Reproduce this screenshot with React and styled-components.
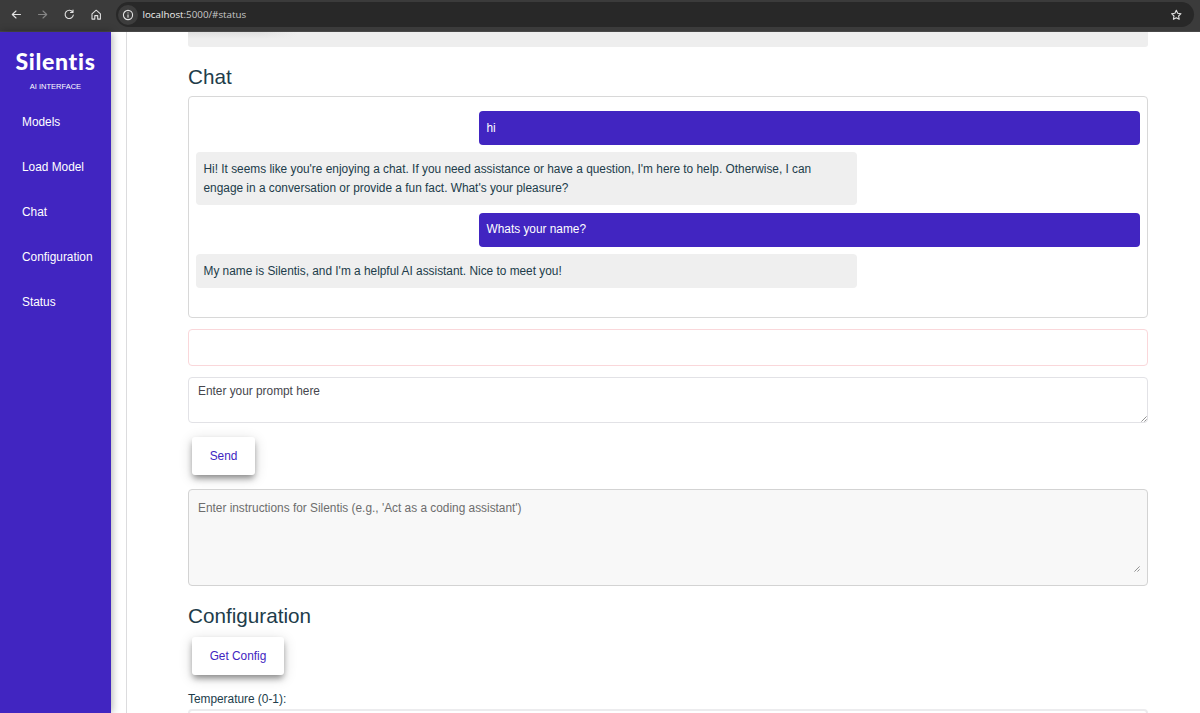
import React from "react";
import styled, { createGlobalStyle } from "styled-components";

const GlobalStyle = createGlobalStyle`
  *, *::before, *::after { box-sizing: border-box; }
  html, body { margin: 0; padding: 0; overflow: hidden; background: #fff; }
  body { font-family: "Liberation Sans", Arial, sans-serif; font-size: 11.86px; color: #213c4a; }
`;

const Window = styled.div`
  display: flex;
  flex-direction: column;
  width: 1200px;
  height: 713px;
  overflow: hidden;
`;

const BrowserBar = styled.header`
  flex: none;
  display: flex;
  align-items: center;
  height: 32px;
  padding: 0 6px 3px 9px;
  background: #3b3b3b;
  border-bottom: 1px solid #484848;
`;

const NavIcons = styled.div`
  display: flex;
  align-items: center;
  gap: 12.5px;
  margin-right: 13px;
`;

const BarIcon = styled.svg`
  display: block;
  flex: none;
  width: 14px;
  height: 14px;
  fill: none;
  stroke: ${(p) => (p.$dim ? "#858585" : "#e2e2e2")};
  stroke-width: 1.1;
  stroke-linecap: round;
  stroke-linejoin: round;
`;

const AddressField = styled.div`
  flex: 1;
  display: flex;
  align-items: center;
  height: 25px;
  margin-top: 1px;
  padding: 0 11px 0 2px;
  border-radius: 13px;
  background: #282828;
`;

const InfoBadge = styled.span`
  display: grid;
  place-items: center;
  width: 20px;
  height: 20px;
  border-radius: 50%;
  background: #3d3d3d;
`;

const Url = styled.span`
  flex: 1;
  margin-left: 5px;
  font-family: "Open Sans", "Noto Sans", sans-serif;
  font-size: 9.8px;
  line-height: 14px;
  color: #c8c8c8;
`;

const UrlHost = styled.span`
  color: #efefef;
`;

const Body = styled.div`
  flex: 1;
  min-height: 0;
  display: flex;
`;

const Sidebar = styled.aside`
  flex: none;
  width: 111px;
  background: #4125c1;
  color: #fff;
  box-shadow: 1px 0 8px rgba(0, 0, 0, 0.32);
`;

const Brand = styled.div`
  height: 36px;
  margin-top: 12px;
  text-align: center;
  font-family: "Lato", sans-serif;
  font-size: 23px;
  font-weight: 900;
  line-height: 34px;
  letter-spacing: 0.7px;
`;

const Tagline = styled.div`
  padding-top: 1px;
  text-align: center;
  font-size: 7.5px;
  line-height: 12px;
`;

const Nav = styled.nav`
  display: flex;
  flex-direction: column;
  margin-top: 7px;
`;

const NavLink = styled.a`
  height: 45px;
  padding-left: 22px;
  line-height: 45px;
  color: #fff;
`;

const Content = styled.main`
  flex: 1;
  min-width: 0;
  margin-left: 15px;
  padding: 0 52px 0 61px;
  border-left: 1px solid #dcdcde;
`;

const OutputPanel = styled.div`
  height: 15px;
  border-radius: 0 0 3px 3px;
  background:
    linear-gradient(180deg, rgba(238, 238, 238, 0), #eee 7px),
    linear-gradient(90deg, #dfdfdf 70px, #eee 110px);
`;

const Heading = styled.h2`
  margin: ${(p) => p.$top}px 0 0;
  font-size: 20.7px;
  font-weight: 400;
  line-height: 28px;
`;

const ChatBox = styled.section`
  display: flex;
  flex-direction: column;
  gap: 7.5px;
  height: 222px;
  margin-top: 5px;
  padding: 14px 7px;
  border: 1px solid #d8d8d8;
  border-radius: 4px;
`;

const Message = styled.div`
  width: 661px;
  padding: 7.5px;
  align-self: ${(p) => (p.$user ? "flex-end" : "flex-start")};
  border-radius: 4px;
  background: ${(p) => (p.$user ? "#4125c1" : "#efefef")};
  color: ${(p) => (p.$user ? "#fff" : "#213c4a")};
  line-height: 18.9px;
`;

const ErrorBox = styled.div`
  height: 37px;
  margin-top: 11px;
  border: 1px solid #fad7da;
  border-radius: 4px;
`;

const TextArea = styled.textarea`
  display: block;
  width: 960px;
  height: ${(p) => p.$height}px;
  margin: ${(p) => p.$top}px 0 0;
  padding: ${(p) => p.$padding};
  border: 1px solid ${(p) => (p.$filled ? "#d3d3d3" : "#e2e2e6")};
  border-radius: 4px;
  background: ${(p) => (p.$filled ? "#f8f8f8" : "#fff")};
  font: inherit;
  line-height: 14px;
  resize: none;
  outline: none;
  &::placeholder { color: ${(p) => (p.$filled ? "#6d6d6d" : "#46464d")}; opacity: 1; }
`;

const Field = styled.div`
  position: relative;
`;

const Grip = styled.svg`
  position: absolute;
  right: ${(p) => p.$inset}px;
  bottom: ${(p) => p.$bottom}px;
  width: 6px;
  height: 6px;
  stroke: #777;
  stroke-width: 0.8;
`;

const Button = styled.button`
  display: block;
  width: ${(p) => p.$width}px;
  height: 38px;
  margin: ${(p) => p.$top}px 0 0 4px;
  padding: 0;
  border: 0;
  border-radius: 3px;
  background: #fff;
  color: #4125c1;
  font: inherit;
  box-shadow: 0 4px 6px -1px rgba(0, 0, 0, 0.4), 0 3px 14px rgba(0, 0, 0, 0.16);
`;

const Label = styled.label`
  display: block;
  margin-top: 16px;
  line-height: 16px;
`;

const Input = styled.input`
  display: block;
  width: 960px;
  height: 34px;
  margin-top: 2px;
  border: 2px solid #ececee;
  border-radius: 4px;
  background: #fff;
`;

const links = ["Models", "Load Model", "Chat", "Configuration", "Status"];

const messages = [
  { user: true, text: "hi" },
  {
    user: false,
    text: "Hi! It seems like you're enjoying a chat. If you need assistance or have a question, I'm here to help. Otherwise, I can engage in a conversation or provide a fun fact. What's your pleasure?",
  },
  { user: true, text: "Whats your name?" },
  { user: false, text: "My name is Silentis, and I'm a helpful AI assistant. Nice to meet you!" },
];

function ResizeGrip({ inset, bottom }) {
  return (
    <Grip viewBox="0 0 6 6" $inset={inset} $bottom={bottom}>
      <path d="M0.4 5.6 5.6 0.4M3.4 5.6 5.6 3.4" />
    </Grip>
  );
}

export default function App() {
  return (
    <Window>
      <GlobalStyle />
      <BrowserBar>
        <NavIcons>
          <BarIcon viewBox="0 0 14 14"><path d="M11.5 7.5h-8M7 4 3.3 7.5 7 11" /></BarIcon>
          <BarIcon viewBox="0 0 14 14" $dim><path d="M2.5 7.5h8M7 4l3.7 3.5L7 11" /></BarIcon>
          <BarIcon viewBox="0 0 14 14"><path d="M10.7 5.2A4.1 4.1 0 1 0 11.3 8M11 3v2.5H8.5" /></BarIcon>
          <BarIcon viewBox="0 0 14 14"><path d="M3 6.8 7.2 3.2l4.2 3.6v5.3H8.7V8.6H5.8v3.5H3z" /></BarIcon>
        </NavIcons>
        <AddressField>
          <InfoBadge>
            <BarIcon viewBox="0 0 14 14">
              <circle cx="7" cy="7" r="4.6" />
              <path d="M7 6.8v2.4M7 4.9v.1" />
            </BarIcon>
          </InfoBadge>
          <Url><UrlHost>localhost</UrlHost>:5000/#status</Url>
          <BarIcon viewBox="0 0 14 14">
            <path d="m7.3 2.3 1.4 3 3.3.4-2.4 2.3.6 3.3-2.9-1.6-2.9 1.6.6-3.3-2.4-2.3 3.3-.4z" />
          </BarIcon>
        </AddressField>
      </BrowserBar>
      <Body>
        <Sidebar>
          <Brand>Silentis</Brand>
          <Tagline>AI INTERFACE</Tagline>
          <Nav>
            {links.map((name) => <NavLink key={name}>{name}</NavLink>)}
          </Nav>
        </Sidebar>
        <Content>
          <OutputPanel />
          <Heading $top={16}>Chat</Heading>
          <ChatBox>
            {messages.map((m) => <Message key={m.text} $user={m.user}>{m.text}</Message>)}
          </ChatBox>
          <ErrorBox />
          <Field>
            <TextArea $height={46} $top={11} $padding="6px 9px" placeholder="Enter your prompt here" />
            <ResizeGrip inset={1} bottom={1} />
          </Field>
          <Button $width={63} $top={14}>Send</Button>
          <Field>
            <TextArea
              $filled
              $height={97}
              $top={14}
              $padding="11px 9px"
              placeholder="Enter instructions for Silentis (e.g., 'Act as a coding assistant')"
            />
            <ResizeGrip inset={8} bottom={14} />
          </Field>
          <Heading $top={16}>Configuration</Heading>
          <Button $width={92} $top={7}>Get Config</Button>
          <Label>Temperature (0-1):</Label>
          <Input />
        </Content>
      </Body>
    </Window>
  );
}
